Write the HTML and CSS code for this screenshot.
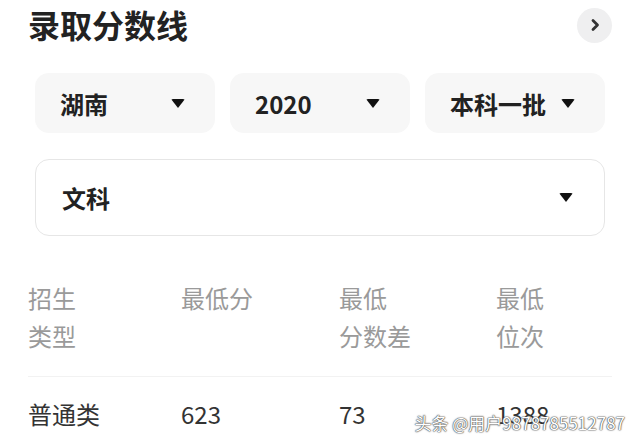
FILE: index.html
```html
<html>
    <head>
        <meta charset="utf-8">
        <link rel="stylesheet" href="styles.css">
    </head>
    <body>
        <div id="page">
            <div class="head">
                <h1>录取分数线</h1>
                <span class="more">
                    <svg width="12" height="14" viewBox="0 0 12 14"><path d="M4 2.5 L8.5 7 L4 11.5" fill="none" stroke="#333" stroke-width="2.8" stroke-linecap="round" stroke-linejoin="round"/></svg>
                </span>
            </div>

            <div class="filters">
                <div class="pick"><span>湖南</span><i class="caret"></i></div>
                <div class="pick"><span>2020</span><i class="caret"></i></div>
                <div class="pick"><span>本科一批</span><i class="caret"></i></div>
            </div>

            <div class="select"><span>文科</span><i class="caret"></i></div>

            <div class="table">
                <div class="row thead">
                    <div>招生<br>类型</div>
                    <div>最低分</div>
                    <div>最低<br>分数差</div>
                    <div>最低<br>位次</div>
                </div>
                <div class="row">
                    <div>普通类</div>
                    <div>623</div>
                    <div>73</div>
                    <div>1388</div>
                </div>
            </div>
        </div>
        <div class="mark">头条 @用户9878785512787</div>
    </body>
</html>
```

FILE: styles.css
```css
body{
    margin: 0;
    background: #fff;
    font-family: "Noto Sans CJK SC", "Noto Sans", sans-serif;
    color: #222;
    overflow: hidden;
}
#page{
    padding: 0 28px;
}
.head{
    display: flex;
    align-items: center;
    justify-content: space-between;
    height: 48px;
}
.head h1{
    margin: 0;
    font-size: 32px;
    font-weight: 700;
    line-height: 48px;
    color: #222;
}
.more{
    width: 35px;
    height: 35px;
    border-radius: 50%;
    background: #efeff0;
    display: flex;
    align-items: center;
    justify-content: center;
    margin-top: 2px;
}
.filters{
    display: flex;
    gap: 15px;
    margin: 25px 7px 0;
}
.pick{
    flex: 1;
    height: 60px;
    border-radius: 14px;
    background: #f7f7f7;
    display: flex;
    align-items: center;
    justify-content: space-between;
    padding: 0 30px 0 25px;
    font-size: 24px;
    font-weight: 700;
    color: #222;
}
.caret{
    display: inline-block;
    width: 0;
    height: 0;
    border-left: 7px solid transparent;
    border-right: 7px solid transparent;
    border-top: 9px solid #111;
    border-radius: 2px;
}
.select{
    margin: 26px 7px 0;
    height: 77px;
    box-sizing: border-box;
    border: 1px solid #e6e6e6;
    border-radius: 14px;
    display: flex;
    align-items: center;
    justify-content: space-between;
    padding: 0 31px 0 26px;
    font-size: 24px;
    font-weight: 700;
    color: #222;
}
.table{
    margin-top: 43px;
    font-size: 24px;
    line-height: 38px;
}
.row{
    display: grid;
    grid-template-columns: 153px 158px 157px 1fr;
}
.thead{
    color: #9a9a9a;
    padding-bottom: 21px;
    border-bottom: 1px solid #f2f2f2;
}
.row + .row{
    padding-top: 18px;
    color: #333;
}
.mark{
    position: absolute;
    right: 15px;
    bottom: 8px;
    font-size: 17px;
    color: #fff;
    text-shadow: 0 0 1px #444, 0 0 1px #444, 0 0 2px #666;
}
```
